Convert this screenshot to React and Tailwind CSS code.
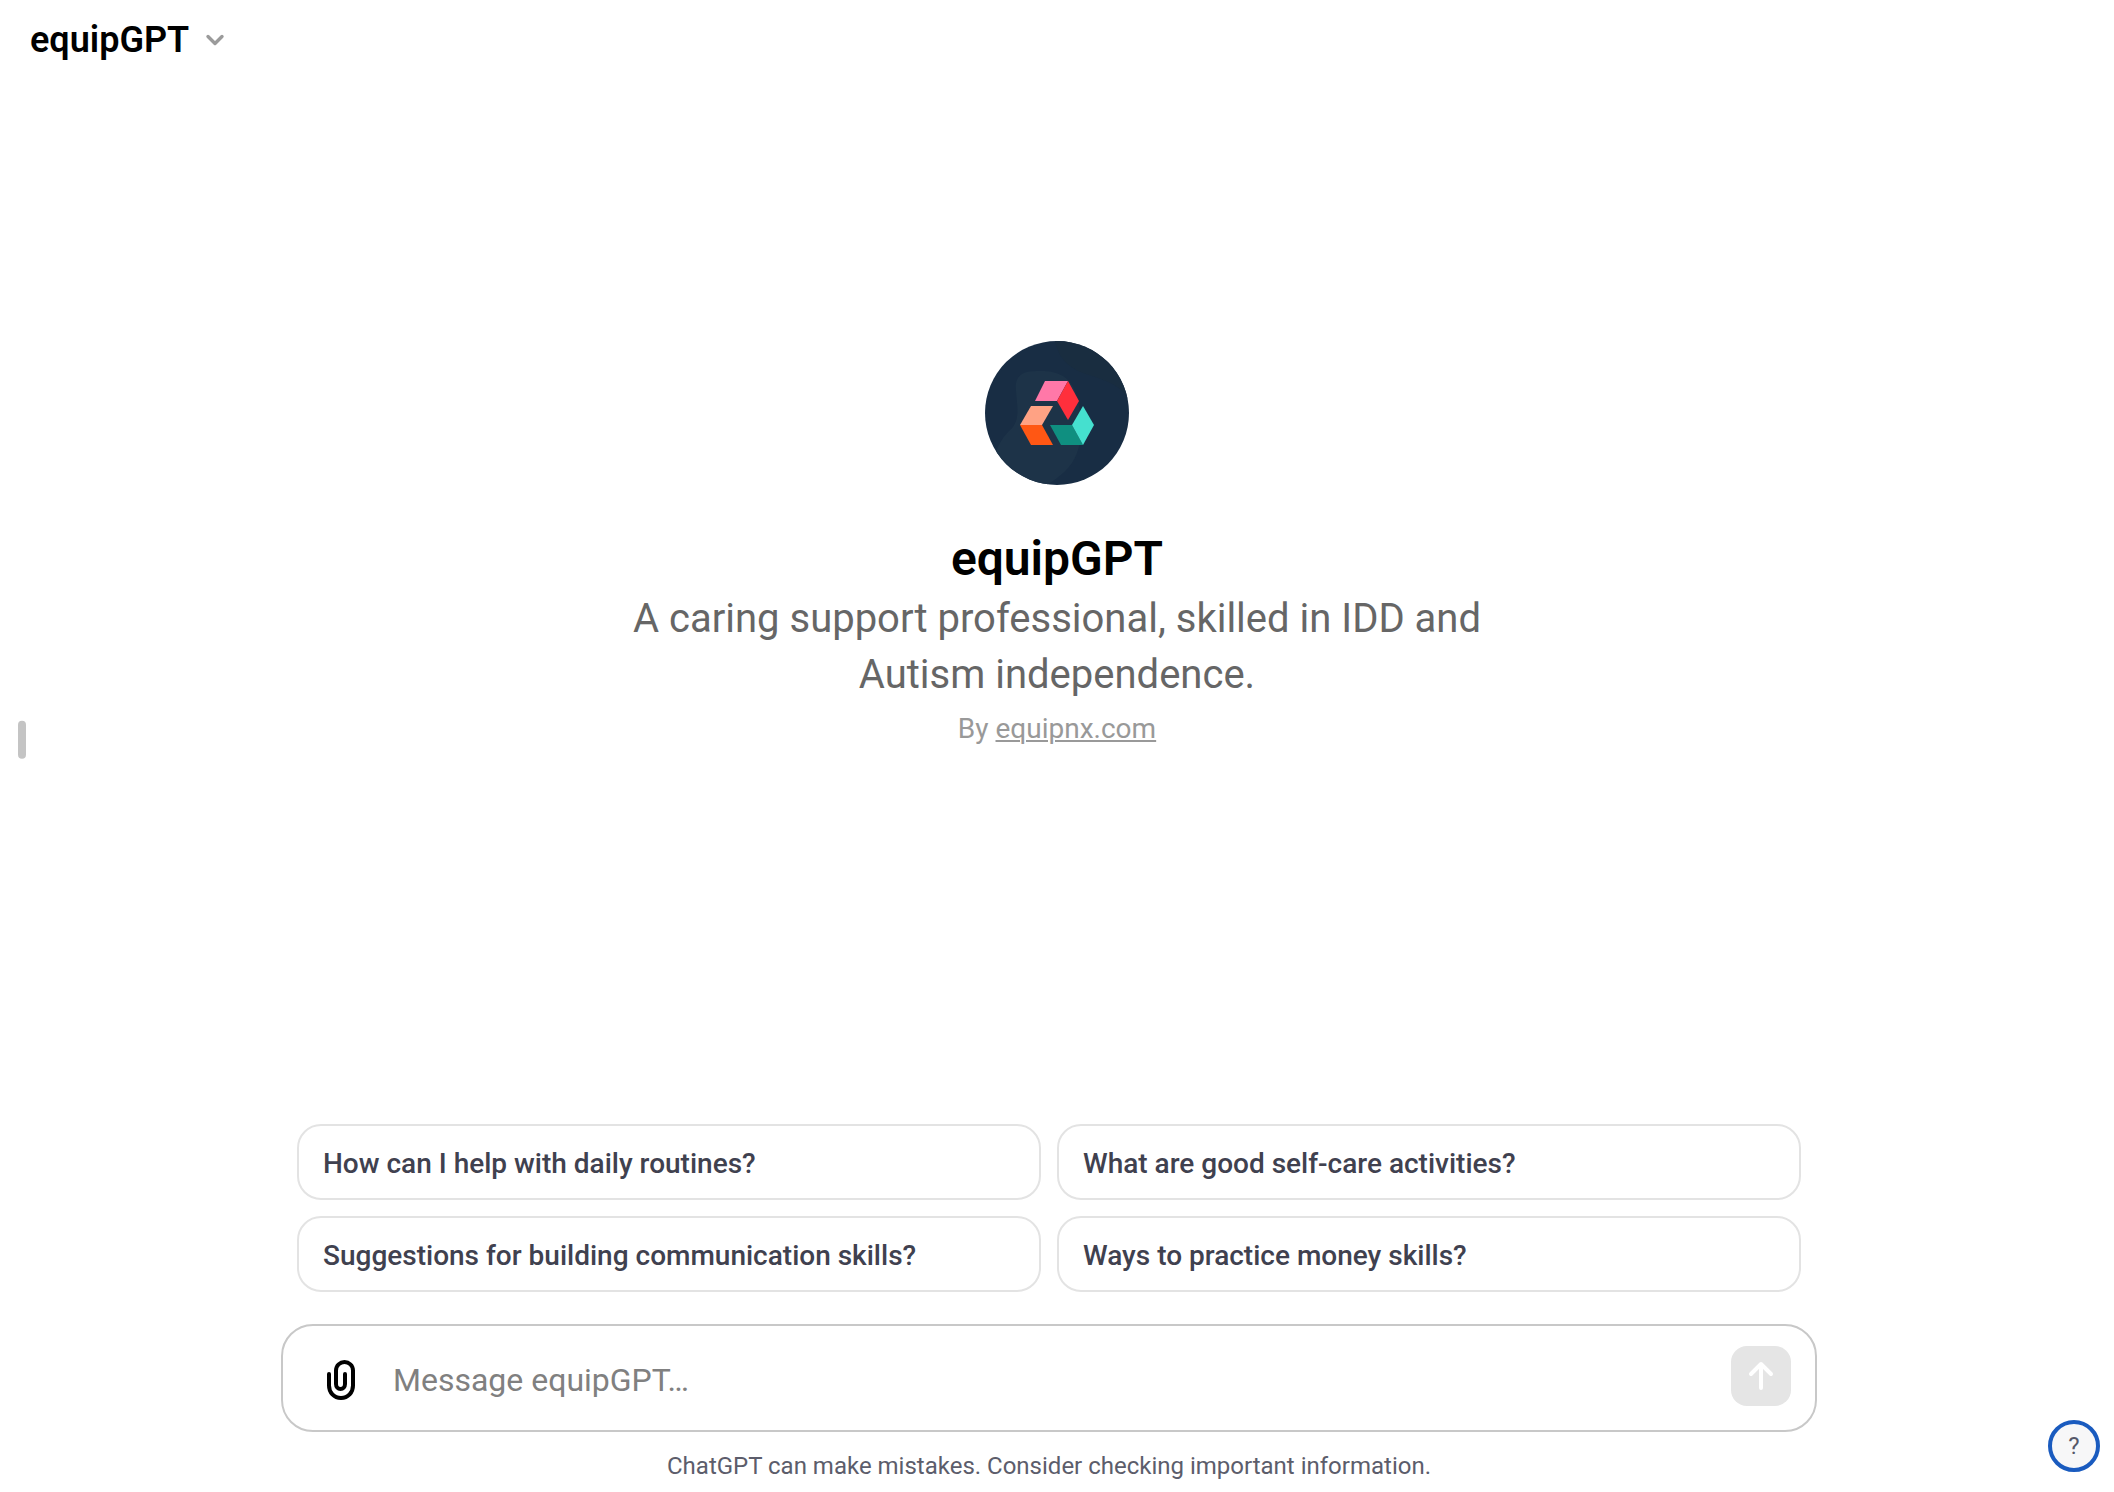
import React, { useState } from "react";

const SUGGESTIONS = [
  "How can I help with daily routines?",
  "What are good self-care activities?",
  "Suggestions for building communication skills?",
  "Ways to practice money skills?",
];

function Logo() {
  return (
    <svg viewBox="0 0 144 144" className="size-36" role="img" aria-label="equipGPT logo">
      <defs>
        <clipPath id="logo-circle">
          <circle cx="72" cy="72" r="72" />
        </clipPath>
      </defs>
      <g clipPath="url(#logo-circle)">
        <rect width="144" height="144" fill="#182d44" />
        <path d="M70 0C74 18 84 28 104 34C124 40 138 46 144 60V0Z" fill="#192d40" />
        <path
          d="M31 50C29 34 38 30 52 30C70 29 84 34 90 50C96 68 100 90 92 112C86 128 74 136 62 144H10C4 118 14 100 24 90C36 80 32 66 31 50Z"
          fill="#1d3348"
        />
      </g>
      <path d="M60 40H83L72 60H50Z" fill="#ff78a8" />
      <path d="M83 40L94 60L83 79L72 60Z" fill="#ff2f3c" />
      <path d="M46 65H68L57 84H35Z" fill="#ffa284" />
      <path d="M35 84H57L68 104H46Z" fill="#ff5714" />
      <path d="M65 84H87L98 104H76Z" fill="#0f8f80" />
      <path d="M98 65L109 84L98 104L87 84Z" fill="#45e0cf" />
    </svg>
  );
}

function Header() {
  return (
    <header className="flex px-6 py-4">
      <button className="flex items-center gap-4 px-1.5 text-4xl leading-12 font-semibold text-black">
        equipGPT
        <svg width="20" height="14" viewBox="0 0 20 14" fill="none" aria-hidden="true">
          <path
            d="M3 3.5L10 10.5L17 3.5"
            stroke="#9b9b9b"
            strokeWidth="3.4"
            strokeLinecap="round"
            strokeLinejoin="round"
          />
        </svg>
      </button>
    </header>
  );
}

function Hero() {
  return (
    <section className="flex flex-1 flex-col items-center justify-center pb-27.5 text-center">
      <Logo />
      <h1 className="mt-10.5 text-5xl leading-16 font-semibold text-black">equipGPT</h1>
      <p className="max-w-4xl text-[40px] leading-14 text-[#666666]">
        A caring support professional, skilled in IDD and Autism independence.
      </p>
      <p className="mt-0.5 text-[28px] leading-12 text-[#999999]">
        By{" "}
        <a href="#equipnx" className="underline decoration-2 underline-offset-2">
          equipnx.com
        </a>
      </p>
    </section>
  );
}

function Composer() {
  const [message, setMessage] = useState("");

  return (
    <form
      className="flex items-start rounded-[32px] border-2 border-[#c8c8c8] bg-white pt-5 pr-6 pb-4 pl-9.5"
      onSubmit={(e) => e.preventDefault()}
    >
      <button type="button" aria-label="Attach files" className="flex h-17 w-10 items-center justify-center">
        <svg width="30" height="42" viewBox="0 0 30 42" fill="none" aria-hidden="true">
          <path
            d="M3 15V26.5C3 33.5 8 39 15 39C22 39 27 33.5 27 26.5V11.5C27 6.5 23 3 18.5 3C14 3 10 6.5 10 11.5V25C10 28 12 30 14.5 30C17 30 19 28 19 25V15"
            stroke="#000000"
            strokeWidth="4"
            strokeLinecap="round"
          />
        </svg>
      </button>
      <input
        aria-label="Message equipGPT"
        placeholder="Message equipGPT…"
        value={message}
        onChange={(e) => setMessage(e.target.value)}
        className="h-17 min-w-0 flex-1 pl-8 text-[32px] text-black outline-none placeholder:text-[#808080]"
      />
      <button
        type="submit"
        aria-label="Send message"
        className="flex size-15 items-center justify-center rounded-2xl bg-[#e5e5e5]"
      >
        <svg width="26" height="30" viewBox="0 0 26 30" fill="none" aria-hidden="true">
          <path
            d="M13 27V3M3 13L13 3L23 13"
            stroke="#ffffff"
            strokeWidth="4"
            strokeLinecap="round"
            strokeLinejoin="round"
          />
        </svg>
      </button>
    </form>
  );
}

function App() {
  return (
    <div className="relative flex min-h-screen flex-col bg-white font-['Roboto','Liberation_Sans',sans-serif]">
      <Header />
      <Hero />

      <div className="mr-4">
        <div className="mx-auto max-w-384">
          <div className="grid grid-cols-2 gap-4 px-4 pb-8">
            {SUGGESTIONS.map((text) => (
              <button
                key={text}
                className="rounded-3xl border-2 border-[#e3e3e3] px-6 pt-4.5 pb-3.5 text-left text-[28px] leading-10 font-medium text-[#40414f]"
              >
                {text}
              </button>
            ))}
          </div>
          <Composer />
          <p className="pt-4.5 pb-2.5 text-center text-2xl text-[#5c5d6b]">
            ChatGPT can make mistakes. Consider checking important information.
          </p>
        </div>
      </div>

      {/* sidebar resize handle */}
      <button
        aria-label="Toggle sidebar"
        className="absolute top-1/2 left-4.5 h-9.5 w-2 -translate-y-2/3 rounded-full bg-[#c4c4c4]"
      />
      <button
        aria-label="Help"
        className="absolute right-3.5 bottom-5 flex size-13 items-center justify-center rounded-full border-4 border-[#1a5bbf] bg-[#f7f7f8] text-2xl text-[#565869]"
      >
        ?
      </button>
    </div>
  );
}

export default App;
